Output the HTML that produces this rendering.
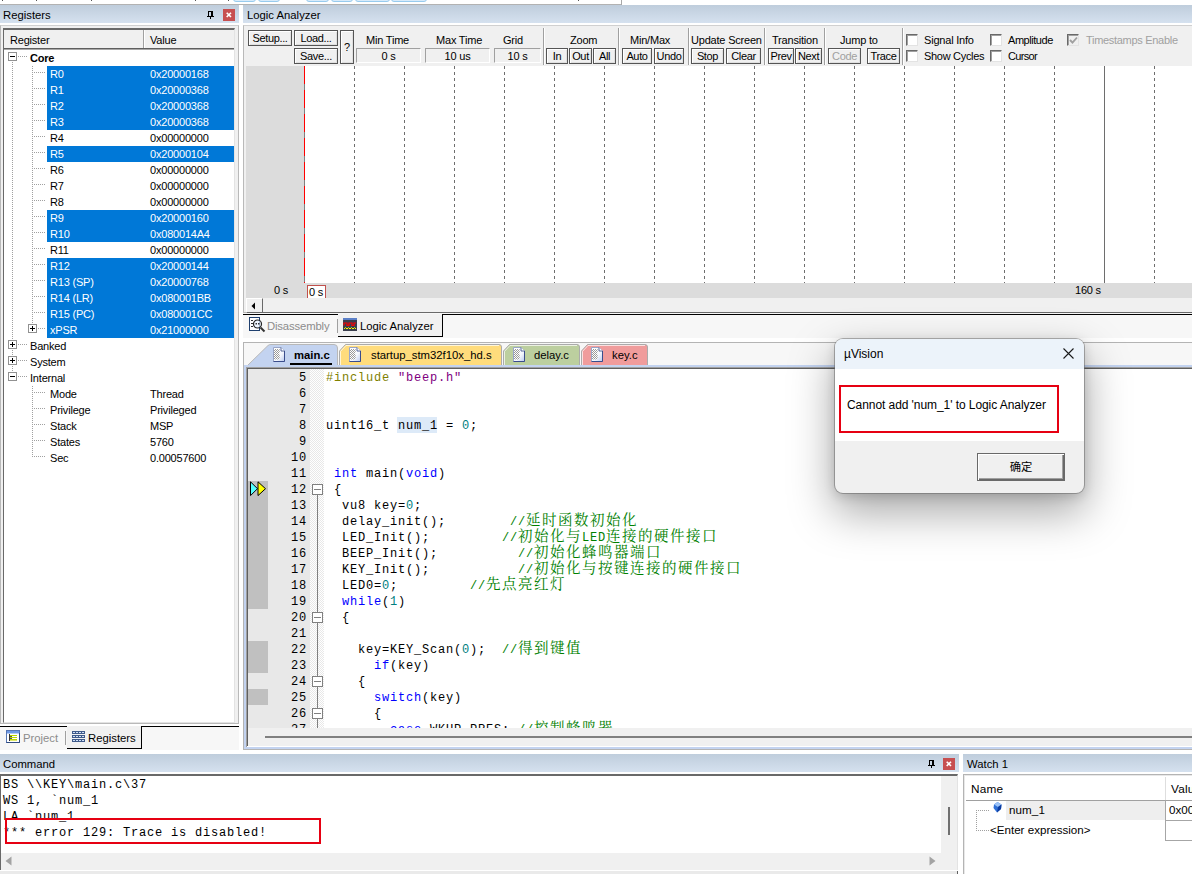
<!DOCTYPE html>
<html><head><meta charset="utf-8"><title>uVision</title>
<style>
*{box-sizing:border-box;margin:0;padding:0}
html,body{width:1192px;height:874px;overflow:hidden;background:#fff}
body{position:relative;font-family:"Liberation Sans","Noto Sans CJK SC",sans-serif;font-size:12px;color:#000}
.a{position:absolute}
.t{position:absolute;white-space:pre;line-height:16px;height:16px;font-size:11px;letter-spacing:-.2px}
.s{position:absolute;white-space:pre;line-height:16px;height:16px;font-size:11.3px;letter-spacing:0}
.title{position:absolute;height:18px;background:linear-gradient(#bfcddc,#d5e1ef)}
.btn{position:absolute;border:1px solid #555;background:#f0f0f0;box-shadow:inset 1px 1px 0 #fff,inset -1px -1px 0 #e0e0e0;font-size:11px;text-align:center;white-space:pre;line-height:15px;letter-spacing:-.35px}
.fld{position:absolute;border:1px solid;border-color:#a0a0a0 #fff #fff #a0a0a0;background:#f0f0f0;font-size:11px;text-align:center;white-space:pre;line-height:15px;height:15px;letter-spacing:-.2px}
.sel{position:absolute;background:#0078d7;left:47px;width:187px;height:16px}
.w{color:#fff}
.cb{position:absolute;width:12px;height:12px;background:#fff;border:1px solid;border-color:#696969 #e3e3e3 #e3e3e3 #696969;box-shadow:inset 1px 1px 0 #a0a0a0}
.vsep{position:absolute;width:2px;border-left:1px solid #a0a0a0;border-right:1px solid #fff}
.code{position:absolute;white-space:pre;line-height:16px;height:16px;font-family:"Liberation Mono","Noto Sans CJK SC",monospace;font-size:12px;letter-spacing:.8px}
.ln{position:absolute;white-space:pre;line-height:16px;height:16px;font-family:"Liberation Mono",monospace;font-size:12px;letter-spacing:.8px;text-align:right;width:40px;left:267px}
.kw{color:#0000ff}.num{color:#008080}.cm{color:#008000}.pp{color:#808000}.str{color:#800080}
.cj{font-family:"Noto Serif CJK SC","Noto Sans CJK SC",serif;font-size:14.5px;letter-spacing:1.5px;line-height:0}
</style></head><body>
<!-- top strip -->
<div class="a" style="left:2px;top:0;width:1px;height:1px;background:#555"></div><div class="a" style="left:36px;top:0;width:1px;height:1px;background:#555"></div><div class="a" style="left:91px;top:0;width:1px;height:1px;background:#555"></div><div class="a" style="left:195px;top:0;width:1px;height:1px;background:#555"></div><div class="a" style="left:228px;top:0;width:1px;height:1px;background:#555"></div><div class="a" style="left:233px;top:-6px;width:23px;height:8px;background:#d9ebf9;border:1px solid #98cbee;border-radius:3px"></div><div class="a" style="left:258px;top:-6px;width:22px;height:8px;background:#d9ebf9;border:1px solid #98cbee;border-radius:3px"></div><div class="a" style="left:306px;top:-6px;width:23px;height:8px;background:#d9ebf9;border:1px solid #98cbee;border-radius:3px"></div><div class="a" style="left:331px;top:-6px;width:22px;height:8px;background:#d9ebf9;border:1px solid #98cbee;border-radius:3px"></div><div class="a" style="left:355px;top:-6px;width:35px;height:8px;background:#d9ebf9;border:1px solid #98cbee;border-radius:3px"></div><div class="a" style="left:391px;top:-6px;width:36px;height:8px;background:#d9ebf9;border:1px solid #98cbee;border-radius:3px"></div><div class="a" style="left:0;top:4px;width:622px;height:1px;background:#b2b2b2"></div><div class="a" style="left:621px;top:0;width:1px;height:5px;background:#a8a8a8"></div><div class="a" style="left:578px;top:0;width:1px;height:1px;background:#555"></div>
<!-- title bars -->
<div class="title" style="left:0;top:5px;width:239px"></div><div class="s" style="left:3px;top:7px">Registers</div>
<div class="title" style="left:243px;top:5px;width:949px"></div><div class="s" style="left:247px;top:7px">Logic Analyzer</div>
<svg class="a" style="left:206px;top:11px" width="9" height="8" viewBox="0 0 9 8"><path d="M2 0h5v5h1v1H5v2H4V6H1V5h1z M3 1v4h2V1z" fill="#000" fill-rule="evenodd"/><rect x="5" y="1" width="1" height="4" fill="#000"/></svg><div class="a" style="left:223px;top:9px;width:12px;height:12px;background:#c74f50"></div><svg class="a" style="left:223px;top:9px" width="12" height="12" viewBox="0 0 12 12"><path d="M3.700 3.700l4.300 4.300M8 3.700l-4.300 4.300" stroke="#fff" stroke-width="1.600"/></svg>
<!-- registers panel -->
<div class="a" style="left:0;top:25px;width:239px;height:699px;background:#f0f0f0;border:1px solid #b9b9b9;border-top-color:#d0d0d0"></div>
<div class="a" style="left:3px;top:28px;width:232px;height:695px;background:#fff;border:1px solid #696969;border-top-width:2px;border-right-color:#e3e3e3;border-bottom-color:#e3e3e3"></div>
<div class="a" style="left:4px;top:30px;width:230px;height:20px;background:#f0f0f0;border-bottom:1px solid #a8a8a8"></div><div class="a" style="left:143px;top:30px;width:2px;height:18px;border-left:1px solid #a0a0a0;border-right:1px solid #fff"></div><div class="a" style="left:4px;top:48px;width:230px;height:1px;background:#5f5f5f"></div><div class="t" style="left:10px;top:32px">Register</div><div class="t" style="left:150px;top:32px">Value</div>
<div class="a" style="left:8px;top:52px;width:9px;height:9px;background:#fff;border:1px solid #919191"></div><div class="a" style="left:10px;top:56px;width:5px;height:1px;background:#000"></div><div class="a" style="left:18px;top:56px;width:10px;height:1px;background-image:linear-gradient(90deg,#a0a0a0 50%,transparent 50%);background-size:2px 1px"></div><div class="t" style="left:30px;top:50px;font-weight:bold">Core</div>
<div class="a" style="left:12px;top:62px;width:1px;height:310px;background-image:linear-gradient(#a0a0a0 50%,transparent 50%);background-size:1px 2px"></div><div class="a" style="left:32px;top:66px;width:1px;height:258px;background-image:linear-gradient(#a0a0a0 50%,transparent 50%);background-size:1px 2px"></div>
<div class="sel" style="top:66px"></div><div class="a" style="left:34px;top:72px;width:12px;height:1px;background-image:linear-gradient(90deg,#a0a0a0 50%,transparent 50%);background-size:2px 1px"></div><div class="t w" style="left:50px;top:66px">R0</div><div class="t w" style="left:150px;top:66px">0x20000168</div>
<div class="sel" style="top:82px"></div><div class="a" style="left:34px;top:88px;width:12px;height:1px;background-image:linear-gradient(90deg,#a0a0a0 50%,transparent 50%);background-size:2px 1px"></div><div class="t w" style="left:50px;top:82px">R1</div><div class="t w" style="left:150px;top:82px">0x20000368</div>
<div class="sel" style="top:98px"></div><div class="a" style="left:34px;top:104px;width:12px;height:1px;background-image:linear-gradient(90deg,#a0a0a0 50%,transparent 50%);background-size:2px 1px"></div><div class="t w" style="left:50px;top:98px">R2</div><div class="t w" style="left:150px;top:98px">0x20000368</div>
<div class="sel" style="top:114px"></div><div class="a" style="left:34px;top:120px;width:12px;height:1px;background-image:linear-gradient(90deg,#a0a0a0 50%,transparent 50%);background-size:2px 1px"></div><div class="t w" style="left:50px;top:114px">R3</div><div class="t w" style="left:150px;top:114px">0x20000368</div>
<div class="a" style="left:34px;top:136px;width:12px;height:1px;background-image:linear-gradient(90deg,#a0a0a0 50%,transparent 50%);background-size:2px 1px"></div><div class="t" style="left:50px;top:130px">R4</div><div class="t" style="left:150px;top:130px">0x00000000</div>
<div class="sel" style="top:146px"></div><div class="a" style="left:34px;top:152px;width:12px;height:1px;background-image:linear-gradient(90deg,#a0a0a0 50%,transparent 50%);background-size:2px 1px"></div><div class="t w" style="left:50px;top:146px">R5</div><div class="t w" style="left:150px;top:146px">0x20000104</div>
<div class="a" style="left:34px;top:168px;width:12px;height:1px;background-image:linear-gradient(90deg,#a0a0a0 50%,transparent 50%);background-size:2px 1px"></div><div class="t" style="left:50px;top:162px">R6</div><div class="t" style="left:150px;top:162px">0x00000000</div>
<div class="a" style="left:34px;top:184px;width:12px;height:1px;background-image:linear-gradient(90deg,#a0a0a0 50%,transparent 50%);background-size:2px 1px"></div><div class="t" style="left:50px;top:178px">R7</div><div class="t" style="left:150px;top:178px">0x00000000</div>
<div class="a" style="left:34px;top:200px;width:12px;height:1px;background-image:linear-gradient(90deg,#a0a0a0 50%,transparent 50%);background-size:2px 1px"></div><div class="t" style="left:50px;top:194px">R8</div><div class="t" style="left:150px;top:194px">0x00000000</div>
<div class="sel" style="top:210px"></div><div class="a" style="left:34px;top:216px;width:12px;height:1px;background-image:linear-gradient(90deg,#a0a0a0 50%,transparent 50%);background-size:2px 1px"></div><div class="t w" style="left:50px;top:210px">R9</div><div class="t w" style="left:150px;top:210px">0x20000160</div>
<div class="sel" style="top:226px"></div><div class="a" style="left:34px;top:232px;width:12px;height:1px;background-image:linear-gradient(90deg,#a0a0a0 50%,transparent 50%);background-size:2px 1px"></div><div class="t w" style="left:50px;top:226px">R10</div><div class="t w" style="left:150px;top:226px">0x080014A4</div>
<div class="a" style="left:34px;top:248px;width:12px;height:1px;background-image:linear-gradient(90deg,#a0a0a0 50%,transparent 50%);background-size:2px 1px"></div><div class="t" style="left:50px;top:242px">R11</div><div class="t" style="left:150px;top:242px">0x00000000</div>
<div class="sel" style="top:258px"></div><div class="a" style="left:34px;top:264px;width:12px;height:1px;background-image:linear-gradient(90deg,#a0a0a0 50%,transparent 50%);background-size:2px 1px"></div><div class="t w" style="left:50px;top:258px">R12</div><div class="t w" style="left:150px;top:258px">0x20000144</div>
<div class="sel" style="top:274px"></div><div class="a" style="left:34px;top:280px;width:12px;height:1px;background-image:linear-gradient(90deg,#a0a0a0 50%,transparent 50%);background-size:2px 1px"></div><div class="t w" style="left:50px;top:274px">R13 (SP)</div><div class="t w" style="left:150px;top:274px">0x20000768</div>
<div class="sel" style="top:290px"></div><div class="a" style="left:34px;top:296px;width:12px;height:1px;background-image:linear-gradient(90deg,#a0a0a0 50%,transparent 50%);background-size:2px 1px"></div><div class="t w" style="left:50px;top:290px">R14 (LR)</div><div class="t w" style="left:150px;top:290px">0x080001BB</div>
<div class="sel" style="top:306px"></div><div class="a" style="left:34px;top:312px;width:12px;height:1px;background-image:linear-gradient(90deg,#a0a0a0 50%,transparent 50%);background-size:2px 1px"></div><div class="t w" style="left:50px;top:306px">R15 (PC)</div><div class="t w" style="left:150px;top:306px">0x080001CC</div>
<div class="sel" style="top:322px"></div><div class="a" style="left:28px;top:324px;width:9px;height:9px;background:#fff;border:1px solid #919191"></div><div class="a" style="left:30px;top:328px;width:5px;height:1px;background:#000"></div><div class="a" style="left:32px;top:326px;width:1px;height:5px;background:#000"></div><div class="a" style="left:38px;top:328px;width:8px;height:1px;background-image:linear-gradient(90deg,#a0a0a0 50%,transparent 50%);background-size:2px 1px"></div><div class="t w" style="left:50px;top:322px">xPSR</div><div class="t w" style="left:150px;top:322px">0x21000000</div>
<div class="a" style="left:8px;top:340px;width:9px;height:9px;background:#fff;border:1px solid #919191"></div><div class="a" style="left:10px;top:344px;width:5px;height:1px;background:#000"></div><div class="a" style="left:12px;top:342px;width:1px;height:5px;background:#000"></div><div class="a" style="left:18px;top:344px;width:10px;height:1px;background-image:linear-gradient(90deg,#a0a0a0 50%,transparent 50%);background-size:2px 1px"></div><div class="t" style="left:30px;top:338px">Banked</div>
<div class="a" style="left:8px;top:356px;width:9px;height:9px;background:#fff;border:1px solid #919191"></div><div class="a" style="left:10px;top:360px;width:5px;height:1px;background:#000"></div><div class="a" style="left:12px;top:358px;width:1px;height:5px;background:#000"></div><div class="a" style="left:18px;top:360px;width:10px;height:1px;background-image:linear-gradient(90deg,#a0a0a0 50%,transparent 50%);background-size:2px 1px"></div><div class="t" style="left:30px;top:354px">System</div>
<div class="a" style="left:8px;top:372px;width:9px;height:9px;background:#fff;border:1px solid #919191"></div><div class="a" style="left:10px;top:376px;width:5px;height:1px;background:#000"></div><div class="a" style="left:18px;top:376px;width:10px;height:1px;background-image:linear-gradient(90deg,#a0a0a0 50%,transparent 50%);background-size:2px 1px"></div><div class="t" style="left:30px;top:370px">Internal</div>
<div class="a" style="left:32px;top:386px;width:1px;height:71px;background-image:linear-gradient(#a0a0a0 50%,transparent 50%);background-size:1px 2px"></div><div class="a" style="left:34px;top:392px;width:12px;height:1px;background-image:linear-gradient(90deg,#a0a0a0 50%,transparent 50%);background-size:2px 1px"></div><div class="t" style="left:50px;top:386px">Mode</div><div class="t" style="left:150px;top:386px">Thread</div>
<div class="a" style="left:34px;top:408px;width:12px;height:1px;background-image:linear-gradient(90deg,#a0a0a0 50%,transparent 50%);background-size:2px 1px"></div><div class="t" style="left:50px;top:402px">Privilege</div><div class="t" style="left:150px;top:402px">Privileged</div>
<div class="a" style="left:34px;top:424px;width:12px;height:1px;background-image:linear-gradient(90deg,#a0a0a0 50%,transparent 50%);background-size:2px 1px"></div><div class="t" style="left:50px;top:418px">Stack</div><div class="t" style="left:150px;top:418px">MSP</div>
<div class="a" style="left:34px;top:440px;width:12px;height:1px;background-image:linear-gradient(90deg,#a0a0a0 50%,transparent 50%);background-size:2px 1px"></div><div class="t" style="left:50px;top:434px">States</div><div class="t" style="left:150px;top:434px">5760</div>
<div class="a" style="left:34px;top:456px;width:12px;height:1px;background-image:linear-gradient(90deg,#a0a0a0 50%,transparent 50%);background-size:2px 1px"></div><div class="t" style="left:50px;top:450px">Sec</div><div class="t" style="left:150px;top:450px">0.00057600</div>
<!-- left bottom tabs -->
<div class="a" style="left:0;top:726px;width:239px;height:24px;background:#f7f7f7"></div><div class="a" style="left:0;top:726px;width:67px;height:1px;background:#000"></div><div class="a" style="left:141px;top:726px;width:98px;height:1px;background:#000"></div><div class="a" style="left:67px;top:726px;width:75px;height:23px;background:#f1f1f1;border:1px solid #000;border-top:none;border-left:none"></div><div class="a" style="left:65px;top:731px;width:1px;height:14px;background:#a0a0a0"></div><svg class="a" style="left:6px;top:730px" width="14" height="13" viewBox="0 0 14 13"><rect x=".5" y=".5" width="13" height="12" fill="#fff" stroke="#5676b4"/><rect x="1" y="1" width="12" height="2.500" fill="#6f9ae6"/><path d="M.5 12.500H13.500V3" fill="none" stroke="#2f4a80"/><rect x="3" y="4" width="1" height="7" fill="#333"/><rect x="4" y="5" width="7" height="1" fill="#b9d600"/><rect x="4" y="7" width="7" height="1" fill="#b9d600"/><rect x="4" y="9" width="7" height="1" fill="#b9d600"/><rect x="4" y="6" width="2" height="1" fill="#555"/><rect x="4" y="8" width="2" height="1" fill="#555"/><rect x="4" y="10" width="7" height="1" fill="#dfe96a"/></svg><div class="s" style="left:23px;top:730px;color:#8c8c8c">Project</div><svg class="a" style="left:72px;top:731px" width="13" height="11" viewBox="0 0 13 11"><g fill="#3f5a8a"><rect x="0" y="0" width="13" height="3"/><rect x="0" y="4" width="13" height="3"/><rect x="0" y="8" width="13" height="3"/></g><g fill="#cfe0f8"><rect x="1" y="1" width="2" height="1"/><rect x="4" y="1" width="2" height="1"/><rect x="7" y="1" width="2" height="1"/><rect x="10" y="1" width="2" height="1"/><rect x="1" y="5" width="2" height="1"/><rect x="4" y="5" width="2" height="1"/><rect x="7" y="5" width="2" height="1"/><rect x="10" y="5" width="2" height="1"/><rect x="1" y="9" width="2" height="1"/><rect x="4" y="9" width="2" height="1"/><rect x="7" y="9" width="2" height="1"/><rect x="10" y="9" width="2" height="1"/></g></svg><div class="s" style="left:88px;top:730px">Registers</div>
<!-- logic analyzer panel -->
<div class="a" style="left:243px;top:25px;width:952px;height:288px;background:#f0f0f0;border:1px solid #b9b9b9;border-top-color:#d0d0d0"></div>
<div class="btn" style="left:248px;top:30px;width:44px;height:16px">Setup...</div><div class="btn" style="left:294px;top:30px;width:44px;height:16px">Load...</div><div class="btn" style="left:294px;top:48px;width:44px;height:16px">Save...</div><div class="btn" style="left:340px;top:30px;width:14px;height:34px;line-height:33px">?</div>
<div class="t" style="left:366px;top:32px">Min Time</div><div class="fld" style="left:356px;top:48px;width:65px">0 s</div><div class="t" style="left:436px;top:32px">Max Time</div><div class="fld" style="left:425px;top:48px;width:65px">10 us</div><div class="t" style="left:503px;top:32px">Grid</div><div class="fld" style="left:494px;top:48px;width:47px">10 s</div>
<div class="vsep" style="left:543px;top:28px;height:37px"></div><div class="vsep" style="left:618px;top:28px;height:37px"></div><div class="vsep" style="left:688px;top:28px;height:37px"></div><div class="vsep" style="left:764px;top:28px;height:37px"></div><div class="vsep" style="left:824px;top:28px;height:37px"></div><div class="vsep" style="left:902px;top:28px;height:37px"></div>
<div class="t" style="left:570px;top:32px">Zoom</div><div class="btn" style="left:546px;top:48px;width:22px;height:16px">In</div><div class="btn" style="left:569px;top:48px;width:23px;height:16px">Out</div><div class="btn" style="left:593px;top:48px;width:23px;height:16px">All</div><div class="t" style="left:630px;top:32px">Min/Max</div><div class="btn" style="left:622px;top:48px;width:30px;height:16px">Auto</div><div class="btn" style="left:654px;top:48px;width:30px;height:16px">Undo</div>
<div class="t" style="left:691px;top:32px">Update Screen</div><div class="btn" style="left:691px;top:48px;width:33px;height:16px">Stop</div><div class="btn" style="left:726px;top:48px;width:35px;height:16px">Clear</div><div class="t" style="left:772px;top:32px">Transition</div><div class="btn" style="left:768px;top:48px;width:26px;height:16px">Prev</div><div class="btn" style="left:795px;top:48px;width:27px;height:16px">Next</div><div class="t" style="left:840px;top:32px">Jump to</div><div class="btn" style="left:828px;top:48px;width:33px;height:16px;color:#a0a0a0">Code</div><div class="btn" style="left:867px;top:48px;width:33px;height:16px">Trace</div>
<div class="cb" style="left:906px;top:34px"></div><div class="cb" style="left:906px;top:50px"></div><div class="cb" style="left:990px;top:34px"></div><div class="cb" style="left:990px;top:50px"></div><div class="cb" style="left:1067px;top:34px;background:#f0f0f0"></div><svg class="a" style="left:1069px;top:36px" width="9" height="9" viewBox="0 0 9 9"><path d="M1 4l2.500 2.700L8 1.500" stroke="#a0a0a0" stroke-width="1.900" fill="none"/></svg><div class="t" style="left:924px;top:32px">Signal Info</div><div class="t" style="left:924px;top:48px;letter-spacing:-.3px">Show Cycles</div><div class="t" style="left:1008px;top:32px;letter-spacing:-.45px">Amplitude</div><div class="t" style="left:1008px;top:48px;letter-spacing:-.65px">Cursor</div><div class="t" style="left:1086px;top:32px;color:#a0a0a0;letter-spacing:-.3px">Timestamps Enable</div>
<div class="a" style="left:246px;top:66px;width:946px;height:232px;background:#dcdcdc"></div><div class="a" style="left:305px;top:66px;width:887px;height:217px;background:#fff"></div><div class="a" style="left:304px;top:66px;width:1px;height:217px;background-image:linear-gradient(#ff0000 75%,#808080 75%);background-size:1px 24px"></div>
<div class="a" style="left:354px;top:66px;width:1px;height:217px;background-image:linear-gradient(#6e6e6e 50%,transparent 50%);background-size:1px 6px"></div><div class="a" style="left:404px;top:66px;width:1px;height:217px;background-image:linear-gradient(#6e6e6e 50%,transparent 50%);background-size:1px 6px"></div><div class="a" style="left:454px;top:66px;width:1px;height:217px;background-image:linear-gradient(#6e6e6e 50%,transparent 50%);background-size:1px 6px"></div><div class="a" style="left:504px;top:66px;width:1px;height:217px;background-image:linear-gradient(#6e6e6e 50%,transparent 50%);background-size:1px 6px"></div><div class="a" style="left:554px;top:66px;width:1px;height:217px;background-image:linear-gradient(#6e6e6e 50%,transparent 50%);background-size:1px 6px"></div><div class="a" style="left:604px;top:66px;width:1px;height:217px;background-image:linear-gradient(#6e6e6e 50%,transparent 50%);background-size:1px 6px"></div><div class="a" style="left:654px;top:66px;width:1px;height:217px;background-image:linear-gradient(#6e6e6e 50%,transparent 50%);background-size:1px 6px"></div><div class="a" style="left:704px;top:66px;width:1px;height:217px;background-image:linear-gradient(#6e6e6e 50%,transparent 50%);background-size:1px 6px"></div><div class="a" style="left:754px;top:66px;width:1px;height:217px;background-image:linear-gradient(#6e6e6e 50%,transparent 50%);background-size:1px 6px"></div><div class="a" style="left:804px;top:66px;width:1px;height:217px;background-image:linear-gradient(#6e6e6e 50%,transparent 50%);background-size:1px 6px"></div><div class="a" style="left:854px;top:66px;width:1px;height:217px;background-image:linear-gradient(#6e6e6e 50%,transparent 50%);background-size:1px 6px"></div><div class="a" style="left:904px;top:66px;width:1px;height:217px;background-image:linear-gradient(#6e6e6e 50%,transparent 50%);background-size:1px 6px"></div><div class="a" style="left:954px;top:66px;width:1px;height:217px;background-image:linear-gradient(#6e6e6e 50%,transparent 50%);background-size:1px 6px"></div><div class="a" style="left:1004px;top:66px;width:1px;height:217px;background-image:linear-gradient(#6e6e6e 50%,transparent 50%);background-size:1px 6px"></div><div class="a" style="left:1054px;top:66px;width:1px;height:217px;background-image:linear-gradient(#6e6e6e 50%,transparent 50%);background-size:1px 6px"></div><div class="a" style="left:1104px;top:66px;width:1px;height:217px;background:#6e6e6e"></div><div class="a" style="left:1154px;top:66px;width:1px;height:217px;background-image:linear-gradient(#6e6e6e 50%,transparent 50%);background-size:1px 6px"></div>
<div class="t" style="left:274px;top:282px">0 s</div><div class="a" style="left:307px;top:285px;width:19px;height:13px;background:#fff;border:1px solid #c0504d;border-bottom:none"></div><div class="t" style="left:309px;top:284px">0 s</div><div class="t" style="left:1075px;top:282px">160 s</div>
<div class="a" style="left:246px;top:298px;width:946px;height:15px;background:#f0f0f0"></div><div class="a" style="left:246px;top:298px;width:17px;height:15px;background:#f0f0f0;border:1px solid;border-color:#fff #696969 #696969 #fff"></div><svg class="a" style="left:251px;top:302px" width="5" height="8" viewBox="0 0 5 8"><path d="M4 0.5L0.5 4L4 7.5z" fill="#000"/></svg><div class="a" style="left:263px;top:312px;width:929px;height:1px;background:#696969"></div>
<!-- view tabs -->
<div class="a" style="left:243px;top:313px;width:949px;height:25px;background:#f7f7f7"></div><div class="a" style="left:243px;top:314px;width:96px;height:1px;background:#000"></div><div class="a" style="left:442px;top:314px;width:750px;height:1px;background:#000"></div><div class="a" style="left:338px;top:314px;width:105px;height:23px;background:#f1f1f1;border:1px solid #000;border-top:none;border-left:none"></div><div class="a" style="left:337px;top:319px;width:1px;height:14px;background:#a0a0a0"></div><svg class="a" style="left:249px;top:317px" width="17" height="16" viewBox="0 0 17 16"><rect x=".5" y=".5" width="10" height="13" fill="#fff" stroke="#1f3f6e"/><g stroke="#333" stroke-width="1"><path d="M2 3.5h2M2 6.5h2M2 9.5h2"/></g><circle cx="8.5" cy="7" r="4" fill="#eaf4ff" fill-opacity=".7" stroke="#222" stroke-width="1.2"/><path d="M6.5 6h1.5v1.5H6.5zM9 6h1.5v1.5H9z" fill="#333"/><path d="M11.5 10.5l4 4" stroke="#333" stroke-width="2"/></svg><div class="s" style="left:267px;top:318px;color:#8c8c8c;letter-spacing:-.15px">Disassembly</div><svg class="a" style="left:343px;top:318px" width="14" height="13" viewBox="0 0 14 13"><rect width="14" height="13" fill="#3a3f4e"/><rect width="14" height="2" fill="#5b7fc7"/><path d="M1 7.500V5h3v2.500h2V5h3v2.500h2V5h2" stroke="#f00" stroke-width="1.200" fill="none"/><path d="M1 11l1.5-1.5L4 11l1.5-1.5L7 11l1.5-1.5L10 11l1.5-1.5L13 11" stroke="#ff0" stroke-width="1" fill="none"/></svg><div class="s" style="left:360px;top:318px">Logic Analyzer</div>
<!-- editor panel -->
<div class="a" style="left:243px;top:342px;width:952px;height:408px;background:#f7f7f7;border:1px solid #b4b4b4"></div>
<div class="a" style="left:244px;top:365px;width:948px;height:384px;background:#c3d3f0"></div><div class="a" style="left:246px;top:367px;width:946px;height:380px;background:#fff;border-left:1px solid #a0a0a0;border-top:1px solid #a0a0a0"></div><div class="a" style="left:247px;top:368px;width:945px;height:378px;background:#fff;border-left:1px solid #606060;border-top:1px solid #606060"></div><div class="a" style="left:248px;top:746px;width:944px;height:1px;background:#fff"></div>
<svg width="0" height="0" style="position:absolute"><defs><pattern id="hatch" width="2" height="2" patternUnits="userSpaceOnUse"><rect width="2" height="2" fill="#fff"/><rect width="1" height="1" fill="#9a9a9a"/><rect x="1" y="1" width="1" height="1" fill="#9a9a9a"/></pattern><linearGradient id="docg" x1="0" y1="0" x2="1" y2="1"><stop offset="0" stop-color="#fff"/><stop offset=".6" stop-color="#f4f7fd"/><stop offset="1" stop-color="#b9c9ee"/></linearGradient></defs></svg>
<svg class="a" style="left:575px;top:344px" width="73" height="21" viewBox="0 0 73 21"><path d="M6.5 22V7L12.5 .5H70Q72.5 .5 72.5 3V22z" fill="#f09c9c" stroke="#ababab"/><path d="M7.5 21V7.400L13 1.500H70" fill="none" stroke="#fff" stroke-opacity=".7"/></svg><svg class="a" style="left:591px;top:347px" width="12" height="15" viewBox="0 0 12 15"><path d="M.5 .5H8L11.500 4V14.500H.5z" fill="url(#docg)" stroke="#9aa6c8"/><path d="M1 2h6l-1 1.500l1 1.500l-1 1.500l1 1.500l-1 1.500l1 1.500l-1 1.500H1z" fill="url(#hatch)"/><path d="M8 .5V4h3.500" fill="#fff" stroke="#46588f" stroke-width=".9"/><path d="M.5 14.500H11.500V4" fill="none" stroke="#3a4d8c"/></svg><div class="s" style="left:612px;top:347px">key.c</div>
<svg class="a" style="left:497px;top:344px" width="83" height="21" viewBox="0 0 83 21"><path d="M6.5 22V7L12.5 .5H80Q82.5 .5 82.5 3V22z" fill="#bccf9f" stroke="#ababab"/><path d="M7.5 21V7.400L13 1.500H80" fill="none" stroke="#fff" stroke-opacity=".7"/></svg><svg class="a" style="left:513px;top:347px" width="12" height="15" viewBox="0 0 12 15"><path d="M.5 .5H8L11.500 4V14.500H.5z" fill="url(#docg)" stroke="#9aa6c8"/><path d="M1 2h6l-1 1.500l1 1.500l-1 1.500l1 1.500l-1 1.500l1 1.500l-1 1.500H1z" fill="url(#hatch)"/><path d="M8 .5V4h3.500" fill="#fff" stroke="#46588f" stroke-width=".9"/><path d="M.5 14.500H11.500V4" fill="none" stroke="#3a4d8c"/></svg><div class="s" style="left:534px;top:347px">delay.c</div>
<svg class="a" style="left:333px;top:344px" width="169" height="21" viewBox="0 0 169 21"><path d="M6.5 22V7L12.5 .5H166Q168.5 .5 168.5 3V22z" fill="#ffdc7c" stroke="#ababab"/><path d="M7.5 21V7.400L13 1.500H166" fill="none" stroke="#fff" stroke-opacity=".7"/></svg><svg class="a" style="left:349px;top:347px" width="12" height="15" viewBox="0 0 12 15"><path d="M.5 .5H8L11.500 4V14.500H.5z" fill="url(#docg)" stroke="#9aa6c8"/><path d="M1 2h6l-1 1.500l1 1.500l-1 1.500l1 1.500l-1 1.500l1 1.500l-1 1.500H1z" fill="url(#hatch)"/><path d="M8 .5V4h3.500" fill="#fff" stroke="#46588f" stroke-width=".9"/><path d="M.5 14.500H11.500V4" fill="none" stroke="#3a4d8c"/></svg><div class="s" style="left:371px;top:347px">startup_stm32f10x_hd.s</div>
<svg class="a" style="left:247px;top:344px" width="91" height="21" viewBox="0 0 91 21"><path d="M0 22L21 1.5Q22 .5 24 .5H87Q90.5 .5 90.5 4V22z" fill="#c3d3f0" stroke="#b8b8b8"/></svg><svg class="a" style="left:273px;top:347px" width="12" height="15" viewBox="0 0 12 15"><path d="M.5 .5H8L11.500 4V14.500H.5z" fill="url(#docg)" stroke="#9aa6c8"/><path d="M1 2h6l-1 1.500l1 1.500l-1 1.500l1 1.500l-1 1.500l1 1.500l-1 1.500H1z" fill="url(#hatch)"/><path d="M8 .5V4h3.500" fill="#fff" stroke="#46588f" stroke-width=".9"/><path d="M.5 14.500H11.500V4" fill="none" stroke="#3a4d8c"/></svg><div class="s" style="left:294px;top:347px;font-weight:bold">main.c</div><div class="a" style="left:290px;top:363px;width:42px;height:2px;background:#000"></div>
<div class="a" style="left:248px;top:369px;width:62px;height:359px;background:#e8e8e8"></div><div class="a" style="left:310px;top:369px;width:14px;height:359px;background-color:#fff;background-image:linear-gradient(45deg,#e8e8e8 25%,transparent 25%,transparent 75%,#e8e8e8 75%),linear-gradient(45deg,#e8e8e8 25%,transparent 25%,transparent 75%,#e8e8e8 75%);background-size:2px 2px;background-position:0 0,1px 1px"></div>
<div class="a" style="left:248px;top:481px;width:20px;height:128px;background:#c0c0c0"></div><div class="a" style="left:248px;top:641px;width:20px;height:32px;background:#c0c0c0"></div><div class="a" style="left:248px;top:689px;width:20px;height:16px;background:#c0c0c0"></div>
<svg class="a" style="left:249px;top:481px" width="18" height="16" viewBox="0 0 18 16"><path d="M1.500 .8L8.500 7.700L1.500 14.600z" fill="#55ffff" stroke="#000" stroke-width="1"/><path d="M9 .8L16.500 7.700L9 14.600z" fill="#ffff00" stroke="#000" stroke-width="1"/></svg>
<div class="a" style="left:317px;top:495px;width:1px;height:233px;background:#808080"></div><div class="a" style="left:312px;top:484px;width:11px;height:11px;background:#fff;border:1px solid #808080"></div><div class="a" style="left:314px;top:489px;width:7px;height:1px;background:#808080"></div><div class="a" style="left:312px;top:612px;width:11px;height:11px;background:#fff;border:1px solid #808080"></div><div class="a" style="left:314px;top:617px;width:7px;height:1px;background:#808080"></div><div class="a" style="left:312px;top:676px;width:11px;height:11px;background:#fff;border:1px solid #808080"></div><div class="a" style="left:314px;top:681px;width:7px;height:1px;background:#808080"></div><div class="a" style="left:312px;top:708px;width:11px;height:11px;background:#fff;border:1px solid #808080"></div><div class="a" style="left:314px;top:713px;width:7px;height:1px;background:#808080"></div>
<div class="a" style="left:248px;top:369px;width:944px;height:359px;overflow:hidden">
<div class="a" style="left:149px;top:48px;width:40px;height:16px;background:#ddeaf8"></div>
<div class="ln" style="left:19px;top:1px">5</div><div class="code" style="left:78px;top:1px"><span class="pp">#include</span> <span class="str">"beep.h"</span></div>
<div class="ln" style="left:19px;top:17px">6</div>
<div class="ln" style="left:19px;top:33px">7</div>
<div class="ln" style="left:19px;top:49px">8</div><div class="code" style="left:78px;top:49px">uint16_t num_1 = <span class="num">0</span>;</div>
<div class="ln" style="left:19px;top:65px">9</div>
<div class="ln" style="left:19px;top:81px">10</div>
<div class="ln" style="left:19px;top:97px">11</div><div class="code" style="left:78px;top:97px"> <span class="kw">int</span> main(<span class="kw">void</span>)</div>
<div class="ln" style="left:19px;top:113px">12</div><div class="code" style="left:78px;top:113px"> {</div>
<div class="ln" style="left:19px;top:129px">13</div><div class="code" style="left:78px;top:129px">  vu8 key=<span class="num">0</span>;</div>
<div class="ln" style="left:19px;top:145px">14</div><div class="code" style="left:78px;top:145px">  delay_init();        <span class="cm">//<span class="cj">延时函数初始化</span></span></div>
<div class="ln" style="left:19px;top:161px">15</div><div class="code" style="left:78px;top:161px">  LED_Init();         <span class="cm">//<span class="cj">初始化与</span>LED<span class="cj">连接的硬件接口</span></span></div>
<div class="ln" style="left:19px;top:177px">16</div><div class="code" style="left:78px;top:177px">  BEEP_Init();          <span class="cm">//<span class="cj">初始化蜂鸣器端口</span></span></div>
<div class="ln" style="left:19px;top:193px">17</div><div class="code" style="left:78px;top:193px">  KEY_Init();           <span class="cm">//<span class="cj">初始化与按键连接的硬件接口</span></span></div>
<div class="ln" style="left:19px;top:209px">18</div><div class="code" style="left:78px;top:209px">  LED0=<span class="num">0</span>;         <span class="cm">//<span class="cj">先点亮红灯</span></span></div>
<div class="ln" style="left:19px;top:225px">19</div><div class="code" style="left:78px;top:225px">  <span class="kw">while</span>(<span class="num">1</span>)</div>
<div class="ln" style="left:19px;top:241px">20</div><div class="code" style="left:78px;top:241px">  {</div>
<div class="ln" style="left:19px;top:257px">21</div>
<div class="ln" style="left:19px;top:273px">22</div><div class="code" style="left:78px;top:273px">    key=KEY_Scan(<span class="num">0</span>);  <span class="cm">//<span class="cj">得到键值</span></span></div>
<div class="ln" style="left:19px;top:289px">23</div><div class="code" style="left:78px;top:289px">      <span class="kw">if</span>(key)</div>
<div class="ln" style="left:19px;top:305px">24</div><div class="code" style="left:78px;top:305px">    {</div>
<div class="ln" style="left:19px;top:321px">25</div><div class="code" style="left:78px;top:321px">      <span class="kw">switch</span>(key)</div>
<div class="ln" style="left:19px;top:337px">26</div><div class="code" style="left:78px;top:337px">      {</div>
<div class="ln" style="left:19px;top:353px">27</div><div class="code" style="left:78px;top:353px">        <span class="kw">case</span> WKUP_PRES: <span class="cm">//<span class="cj">控制蜂鸣器</span></span></div>
</div>
<div class="a" style="left:248px;top:728px;width:944px;height:18px;background:#f0f0f0"></div><div class="a" style="left:265px;top:736px;width:927px;height:2px;background:#808080"></div>
<!-- command panel -->
<div class="title" style="left:0;top:754px;width:959px"></div><div class="s" style="left:3px;top:756px">Command</div><svg class="a" style="left:927px;top:760px" width="9" height="8" viewBox="0 0 9 8"><path d="M2 0h5v5h1v1H5v2H4V6H1V5h1z M3 1v4h2V1z" fill="#000" fill-rule="evenodd"/><rect x="5" y="1" width="1" height="4" fill="#000"/></svg><div class="a" style="left:943px;top:758px;width:12px;height:12px;background:#c74f50"></div><svg class="a" style="left:943px;top:758px" width="12" height="12" viewBox="0 0 12 12"><path d="M3.700 3.700l4.300 4.300M8 3.700l-4.300 4.300" stroke="#fff" stroke-width="1.600"/></svg>
<div class="a" style="left:0;top:774px;width:958px;height:96px;background:#f0f0f0;border-left:1px solid #696969;border-top:2px solid #696969;border-right:1px solid #e3e3e3"></div><div class="a" style="left:1px;top:776px;width:940px;height:77px;background:#fff;overflow:hidden">
<div class="code" style="left:2px;top:1px">BS \\KEY\main.c\37</div>
<div class="code" style="left:2px;top:17px">WS 1, `num_1</div>
<div class="code" style="left:2px;top:33px">LA `num_1</div>
<div class="code" style="left:2px;top:49px">*** error 129: Trace is disabled!</div>
</div>
<div class="a" style="left:5px;top:818px;width:316px;height:26px;border:2px solid #e60012"></div>
<div class="a" style="left:948px;top:807px;width:2px;height:28px;background:#707070"></div><svg class="a" style="left:5px;top:856px" width="7" height="10" viewBox="0 0 7 10"><path d="M6.5 .5L.5 5l6 4.500z" fill="#a3a3a3"/></svg><svg class="a" style="left:929px;top:856px" width="7" height="10" viewBox="0 0 7 10"><path d="M.5 .5L6.500 5l-6 4.500z" fill="#a3a3a3"/></svg>
<div class="a" style="left:0;top:871px;width:958px;height:3px;background:#eaeaea"></div><div class="a" style="left:957px;top:871px;width:1px;height:3px;background:#606060"></div>
<!-- watch panel -->
<div class="title" style="left:963px;top:754px;width:229px"></div><div class="s" style="left:967px;top:756px">Watch 1</div><div class="a" style="left:963px;top:774px;width:232px;height:104px;background:#fff;border:1px solid #b4b4b4"></div><div class="a" style="left:964px;top:775px;width:230px;height:102px;border:1px solid #e8e8e8;border-right:none;border-bottom:none"></div><div class="a" style="left:966px;top:800px;width:226px;height:1px;background:#a0a0a0"></div><div class="a" style="left:1165px;top:777px;width:1px;height:23px;background:#dedede"></div><div class="a" style="left:1165px;top:800px;width:1px;height:41px;background:#a6a6a6"></div><div class="a" style="left:1006px;top:801px;width:159px;height:19px;background:#eeeeee"></div><div class="a" style="left:1166px;top:820px;width:26px;height:1px;background:#a6a6a6"></div><div class="a" style="left:1166px;top:840px;width:26px;height:1px;background:#a6a6a6"></div>
<div class="s" style="left:971px;top:781px;font-size:11.8px;letter-spacing:.2px">Name</div><div class="s" style="left:1171px;top:781px;font-size:11.8px;letter-spacing:.2px">Value</div><div class="a" style="left:976px;top:810px;width:13px;height:1px;background-image:linear-gradient(90deg,#a0a0a0 50%,transparent 50%);background-size:2px 1px"></div><div class="a" style="left:976px;top:810px;width:1px;height:21px;background-image:linear-gradient(#a0a0a0 50%,transparent 50%);background-size:1px 2px"></div><div class="a" style="left:976px;top:830px;width:13px;height:1px;background-image:linear-gradient(90deg,#a0a0a0 50%,transparent 50%);background-size:2px 1px"></div><svg class="a" style="left:993px;top:802px" width="9" height="11" viewBox="0 0 9 11"><path d="M4.500 0L8.500 2.500L8 7L4 10.500L.5 6L1 2.500z" fill="#2f6fd6"/><path d="M4.500 0L8.500 2.500L5 5L1 2.500z" fill="#9cc3f7"/><path d="M5 5L8.500 2.500L8 7L4 10.500z" fill="#0b3a9e"/></svg><div class="s" style="left:1009px;top:802px;font-size:11.6px;letter-spacing:.1px">num_1</div><div class="s" style="left:1169px;top:802px;font-size:11.6px">0x0000</div><div class="s" style="left:990px;top:822px;font-size:11.6px">&lt;Enter expression&gt;</div>
<!-- message dialog -->
<div class="a" style="left:835px;top:339px;width:249px;height:154px;border-radius:8px;background:#f0f0f0;box-shadow:0 0 0 1px rgba(100,100,100,.5),0 18px 44px 2px rgba(0,0,0,.34),0 3px 12px rgba(0,0,0,.16);overflow:hidden"><div class="a" style="left:0;top:0;width:249px;height:30px;background:#ecf3fa"></div><div class="a" style="left:0;top:30px;width:249px;height:72px;background:#fff"></div><div class="s" style="left:9px;top:7px;font-size:12px">µVision</div><svg class="a" style="left:228px;top:9px" width="11" height="11" viewBox="0 0 11 11"><path d="M.5 .5l10 10M10.500 .5l-10 10" stroke="#1a1a1a" stroke-width="1.1"/></svg><div class="a" style="left:4px;top:46px;width:220px;height:48px;border:2px solid #e60012"></div><div class="s" style="left:12px;top:58px;font-size:12px;letter-spacing:-.07px">Cannot add 'num_1' to Logic Analyzer</div><div class="a" style="left:142px;top:114px;width:88px;height:28px;background:#f0f0f0;border:1px solid #696969;box-shadow:inset 1px 1px 0 #fff,inset -1px -1px 0 #696969,inset -2px -2px 0 #a0a0a0"></div><div class="s" style="left:142px;top:120px;width:88px;text-align:center">确定</div></div>
</body></html>
